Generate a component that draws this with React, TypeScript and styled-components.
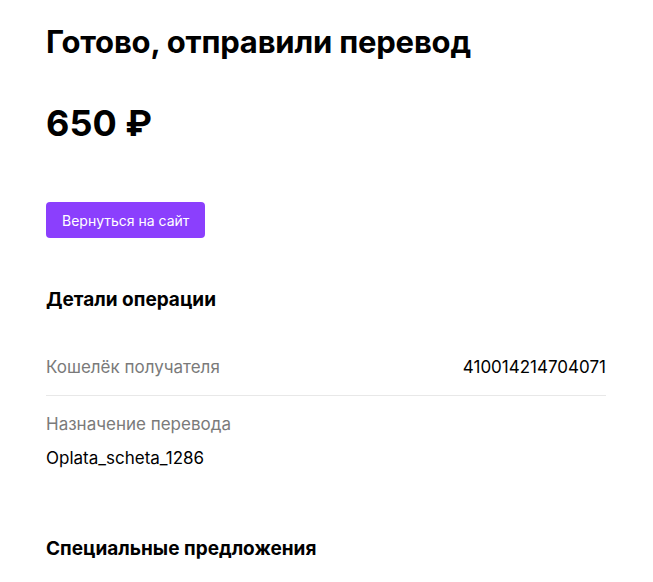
import React from 'react';
import styled, { createGlobalStyle } from 'styled-components';

const GlobalStyle = createGlobalStyle`
  body {
    margin: 0;
    background: #fff;
    font-family: Inter, "Noto Sans", "Liberation Sans", sans-serif;
    color: #000;
  }
`;

const Page = styled.main`
  width: 560px;
  padding: 24px 46px 0;
`;

const Title = styled.h1`
  margin: 0;
  font-size: 31px;
  line-height: 36px;
  font-weight: 700;
  letter-spacing: -0.2px;
`;

const Amount = styled.div`
  margin-top: 41px;
  font-size: 36px;
  line-height: 44px;
  font-weight: 700;
`;

const BackButton = styled.button`
  display: block;
  margin-top: 57px;
  height: 36px;
  padding: 0 16px;
  border: none;
  border-radius: 4px;
  background: #8b3ffd;
  color: #fff;
  font-family: inherit;
  font-size: 14px;
  cursor: pointer;
`;

const SectionTitle = styled.h2<{ gap: number }>`
  margin: ${({ gap }) => gap}px 0 0;
  font-size: 19px;
  line-height: 24px;
  font-weight: 700;
`;

const Row = styled.div<{ stacked?: boolean; divider?: boolean }>`
  display: flex;
  flex-direction: ${({ stacked }) => (stacked ? 'column' : 'row')};
  justify-content: space-between;
  gap: ${({ stacked }) => (stacked ? '12px' : '0')};
  padding: 17px 0;
  border-bottom: ${({ divider }) => (divider ? '1px solid #e8e8e8' : 'none')};
  font-size: 17px;
  line-height: 22px;
`;

const Label = styled.span`
  color: #7a7a7a;
`;

const Value = styled.span`
  color: #000;
`;

const Details = styled.section`
  margin-top: 27px;
`;

export default function App() {
  return (
    <>
      <GlobalStyle />
      <Page>
        <Title>Готово, отправили перевод</Title>
        <Amount>650 ₽</Amount>
        <BackButton>Вернуться на сайт</BackButton>
        <SectionTitle gap={50}>Детали операции</SectionTitle>
        <Details>
          <Row divider>
            <Label>Кошелёк получателя</Label>
            <Value>410014214704071</Value>
          </Row>
          <Row stacked>
            <Label>Назначение перевода</Label>
            <Value>Oplata_scheta_1286</Value>
          </Row>
        </Details>
        <SectionTitle gap={51}>Специальные предложения</SectionTitle>
      </Page>
    </>
  );
}
